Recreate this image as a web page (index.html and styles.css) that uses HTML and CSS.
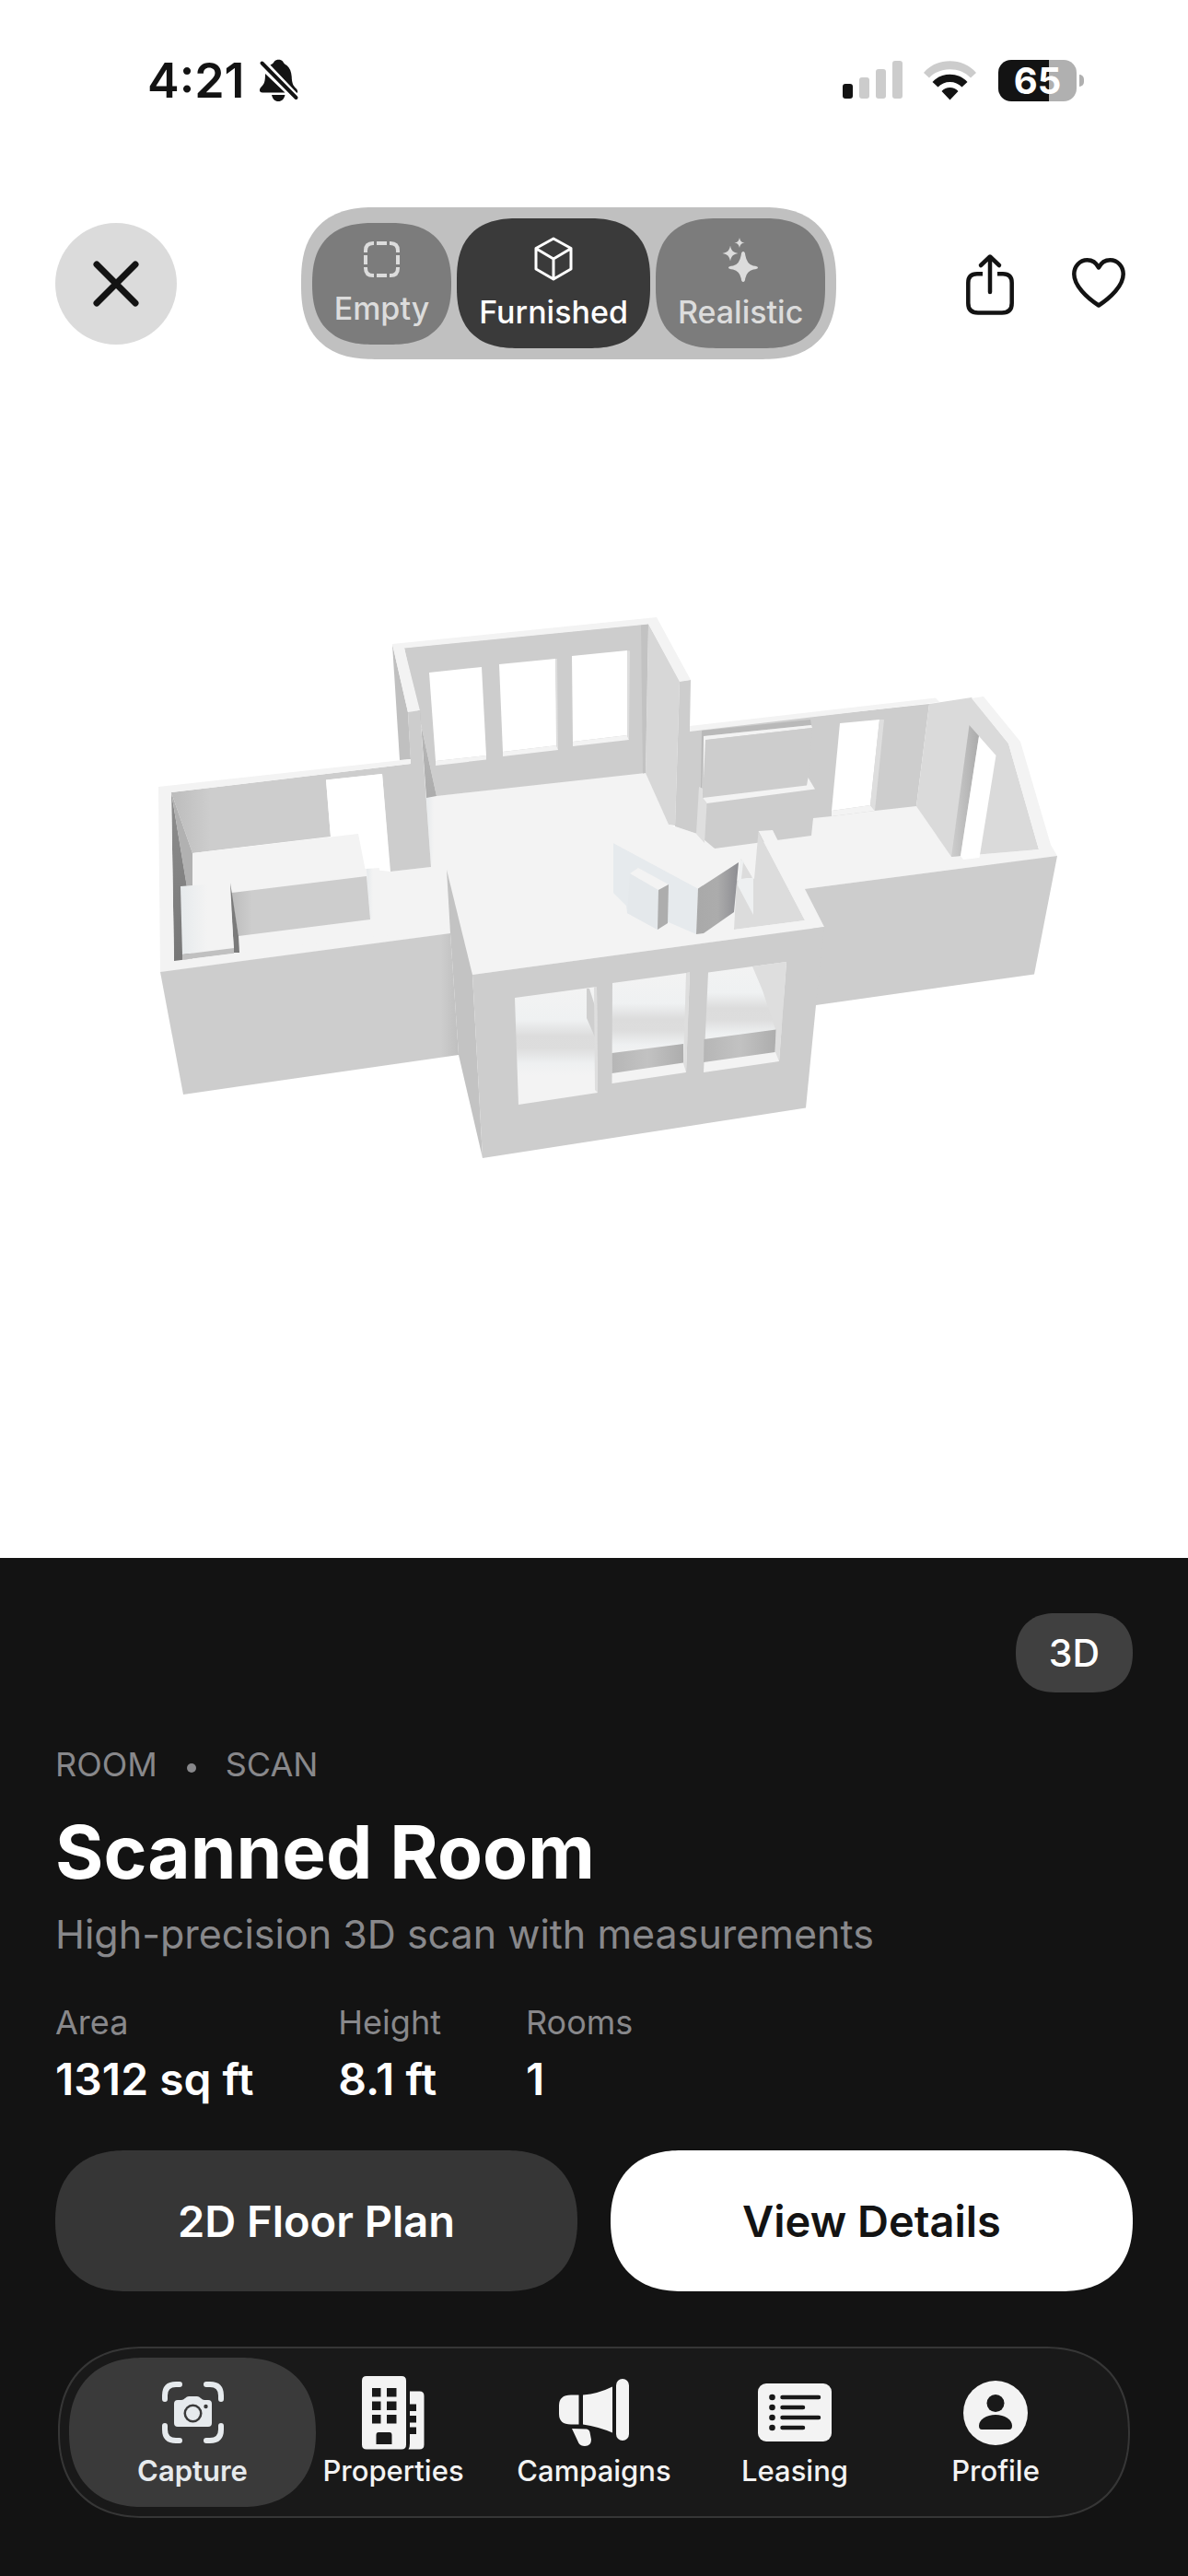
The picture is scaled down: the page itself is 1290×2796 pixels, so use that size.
FILE: index.html
```html
<!DOCTYPE html>
<html lang="en">
<head>
<meta charset="utf-8">
<meta name="viewport" content="width=device-width, initial-scale=1">
<title>Scanned Room</title>
<link rel="stylesheet" href="styles.css">
</head>
<body>
<div class="status">
  <div class="status-left">
    <span class="time">4:21</span>
    <svg width="42" height="46" viewBox="281 65 42 46" aria-label="Silent mode">
      <path fill="#131313" d="M292.500 71.500C294.500 70.500 296 69.500 297 67.500C299 65 304 65 306 67.500C307 69.500 308 70.500 310.500 72C314 75 315.300 79 315.700 84C316 92 317.500 94 320.500 97C322.500 99 322.500 101 321.500 102ZM287 81L308.500 101.500H284C280.500 101.500 280 98 282.500 95.500C286 92 287 90 287 81ZM294 104H308.500C307.500 108.500 305 111 301.300 111C297.500 111 295 108.500 294 104Z"/>
      <path stroke="#131313" stroke-width="4" stroke-linecap="round" d="M283.500 69.500L320.500 107"/>
    </svg>
  </div>
  <div class="status-right">
    <svg width="65" height="42" viewBox="916 66 65 42" aria-label="Signal">
      <rect x="916" y="91" width="11" height="16" rx="3" fill="#131313"/>
      <g fill="#ccc"><rect x="934" y="84" width="11" height="23" rx="3"/><rect x="952" y="75" width="11" height="32" rx="3"/><rect x="970" y="66" width="11" height="41" rx="3"/></g>
    </svg>
    <svg width="58" height="43" viewBox="1004 65 58 43" aria-label="Wi-Fi">
      <path fill="#ccc" d="M1004 78C1018 61 1047 61 1061 78L1055 83.500C1044 71 1021 71 1010 83.500Z"/>
      <path fill="#131313" d="M1013.500 88C1023 77 1042 77 1051.500 88L1045.500 93.500C1039 86 1026 86 1019.500 93.500ZM1023.500 98C1028 92.500 1037 92.500 1041.500 98L1032.500 107.500Z"/>
    </svg>
    <div class="battery"><span class="battery-level">65</span></div>
  </div>
</div>

<header class="topbar">
  <button class="close" aria-label="Close">
    <svg width="50" height="50" viewBox="0 0 50 50" fill="none" stroke="#131313" stroke-width="7" stroke-linecap="round"><path d="M4 4L46 46M46 4L4 46"/></svg>
  </button>
  <div class="modes">
    <button class="mode">
      <svg width="39" height="39" viewBox="0 -2 39 39" fill="none" stroke="currentColor" stroke-width="4"><path d="M2 12V10Q2 2 10 2H11M14 2H25M28 2H29Q37 2 37 10V12M37 15V25M37 28V29Q37 37 29 37H28M25 37H14M11 37H10Q2 37 2 29V28M2 25V15"/></svg>
      <span>Empty</span>
    </button>
    <button class="mode mode-active">
      <svg width="44" height="48" viewBox="0 0 44 48" fill="none" stroke="currentColor" stroke-width="3" stroke-linejoin="round"><path d="M22 4L41 14.500V37L22 48L3 37V14.500ZM3.500 15L22 26L40.500 15M22 26V47"/></svg>
      <span>Furnished</span>
    </button>
    <button class="mode">
      <svg width="40" height="48" viewBox="0 -1 40 48" fill="currentColor"><path d="M23 17Q25 17 25.300 21Q27 31 34 32.500Q39 33 39 34.500Q39 36 34 36.500Q27 38 25.300 46Q25 50 23 50Q21 50 20.700 46Q19 38 12 36.500Q7 36 7 34.500Q7 33 12 32.500Q19 31 20.700 21Q21 17 23 17ZM9 10.500C10 16 12 18 17.500 19C12 20 10 22 9 27.500C8 22 6 20 .5 19C6 18 8 16 9 10.500ZM19 2C19.800 5.500 21 7 24.500 7.500C21 8 19.800 9.500 19 13C18.200 9.500 17 8 13.500 7.500C17 7 18.200 5.500 19 2Z"/></svg>
      <span>Realistic</span>
    </button>
  </div>
  <div class="actions">
    <button class="icon-button" aria-label="Share">
      <svg width="64" height="70" viewBox="1043 274 64 70" fill="none" stroke="#131313" stroke-width="4.500"><path d="M1067 298.300H1061Q1051.300 298.300 1051.300 308V330Q1051.300 340.500 1062 340.500H1088Q1098.700 340.500 1098.700 330V308Q1098.700 298.300 1089 298.300H1083"/><path stroke-linecap="round" stroke-linejoin="round" d="M1075 318V280M1065 289L1075 279.500L1085 289"/></svg>
    </button>
    <button class="icon-button" aria-label="Favorite">
      <svg width="74" height="70" viewBox="1156 274 74 70" fill="none" stroke="#131313" stroke-width="4.500" stroke-linejoin="round"><path d="M1193 332.500C1180 324 1166.300 311 1166.300 298.500C1166.300 290 1172.500 283.300 1180.500 283.300C1186 283.300 1190.500 286.500 1193 291.500C1195.500 286.500 1200 283.300 1205.500 283.300C1213.500 283.300 1219.700 290 1219.700 298.500C1219.700 311 1206 324 1193 332.500Z"/></svg>
    </button>
  </div>
</header>

<main class="viewer">
  <svg class="model" viewBox="0 640 1290 640" role="img" aria-label="3D model of the scanned room">
    <defs>
      <linearGradient id="dark" x1="0" y1="0" x2="0" y2="1"><stop offset="0" stop-color="#8e8e8e"/><stop offset="1" stop-color="#777"/></linearGradient>
      <linearGradient id="backLeft"><stop offset="0" stop-color="#bcbcbc"/><stop offset=".15" stop-color="#cdcdcd"/></linearGradient>
      <linearGradient id="sideWall" x1="0" y1="0" x2="0" y2="1"><stop offset="0" stop-color="#c6c6c6"/><stop offset="1" stop-color="#acacac"/></linearGradient>
      <linearGradient id="corner"><stop offset="0" stop-color="#cdcdcd"/><stop offset=".94" stop-color="#cdcdcd"/><stop offset="1" stop-color="#bfbfbf"/></linearGradient>
      <linearGradient id="facet"><stop offset="0" stop-color="#a9a9a9"/><stop offset=".5" stop-color="#acacac"/><stop offset="1" stop-color="#8d8d92"/></linearGradient>
      <linearGradient id="band"><stop offset="0" stop-color="#b6b6b6"/><stop offset=".5" stop-color="#c2c2c2"/><stop offset="1" stop-color="#adadad"/></linearGradient>
      <linearGradient id="glass" x1="0" y1="0" x2="0" y2="1"><stop offset="0" stop-color="#f3f3f3"/><stop offset=".28" stop-color="#eff1f2"/><stop offset=".42" stop-color="#dcdcdc"/><stop offset=".52" stop-color="#dddddd"/><stop offset=".65" stop-color="#eef0f1"/><stop offset=".75" stop-color="#f3f3f3"/><stop offset="1" stop-color="#f3f3f3"/></linearGradient>
      <linearGradient id="shade"><stop offset="0" stop-color="#e6eaec"/><stop offset=".5" stop-color="#f3f3f3"/></linearGradient>
      <linearGradient id="jamb"><stop offset="0" stop-color="#cdcdcd"/><stop offset="1" stop-color="#ababab"/></linearGradient>
    </defs>
    <!-- floor -->
    <path fill="#f3f3f3" d="M463 865L701 838L726 895L757 905L903 880L945 874L995 874L1033 930L1130 922L1148 929L873 965L895 1006L513 1058L489 1013L174 1055L189 1043L209 926L398 943L424 946L468 941Z"/>
    <path fill="url(#shade)" d="M463 865L479 863L474 905L468 941Z"/>
    <!-- rear room -->
    <path fill="#c0c0c0" d="M426 699L443 773L446 824L434 825Z"/>
    <path fill="#cdcdcd" d="M439 703L704 677L701 839L474 864Z"/>
    <path fill="#c2c2c2" d="M696 678L704 677L701 839L698 839.500Z"/>
    <path fill="url(#sideWall)" d="M439 703L474 864L463 866L456 771Z"/>
    <path fill="#fff" d="M466 730L523 724L528 820L473 826ZM542 721L603 715L605 809L546 816ZM621 712L681 706V798L622 805Z"/>
    <path fill="#f3f3f3" d="M473 826L528 820V824.500L473 831ZM546 816L605 809L606 814L546 821ZM622 805L681 798L683 803L622 810Z"/>
    <path fill="#dedede" d="M681 706L684 706.500L683 803L681 799ZM603 715L605 715L606 813L604 810Z"/>
    <path fill="#d7d7d7" d="M704 677L738 739L733 896L726 895L701 839Z"/>
    <!-- rear wall of the right room -->
    <path fill="#cdcdcd" d="M738 739L750 738L749 792L1009 764L995 875L950 880L903 886L883 888L881 907L776 921L757 905L733 897Z"/>
    <path fill="#f3f3f3" d="M749 788L1016 757.500L1020 762L749 794Z"/>
    <path fill="#fff" d="M912 785L955 781L945 874L903 880Z"/>
    <path fill="#f3f3f3" d="M903 880L945 874L950 880L903 886Z"/>
    <path fill="#dedede" d="M955 781L960 781L950 880L945 874Z"/>
    <path fill="#b9b9b9" d="M762 793L880 781L881 787L764 799L762 855H761Z"/>
    <path fill="#f3f3f3" d="M764 799L881 787L882 790L768 803L764 866Z"/>
    <path fill="#cdcdcd" d="M766 803L882 790L877 853L763 866Z"/>
    <path fill="#f3f3f3" d="M763 866L876 852.500L877.500 844L885 856.500L767.500 872Z"/>
    <path fill="#dfdfdf" d="M759 854L763 856V866L767.500 872L765 915L756 905Z"/>
    <!-- angled wall -->
    <path fill="#dadada" d="M1009 764L1055 757L1095 807L1128 922L1033 930L995 875Z"/>
    <path fill="url(#jamb)" d="M1052.500 787L1063 799L1043 929L1033 930Z"/>
    <path fill="#fff" d="M1063 799L1081.500 820L1063.500 931L1046 933L1043 929Z"/>
    <path fill="#f3f3f3" d="M1055 758L1068 756L1108 805L1141 917L1148 929L1080 939L1045 934L1128 922L1095 807ZM713 670L750 738L738 740L704 677ZM426 699L713 670L704 677.500L439 703.500L456 771L443 773.500Z"/>
    <!-- left room -->
    <path fill="url(#backLeft)" d="M186 860L446 829L443 773L456 771L468 941L424 946L415 840L354 846.500L359 908L209 926Z"/>
    <path fill="#fff" d="M354 846.500L415 840L423 942L398 943L389 905L359 908Z"/>
    <path fill="url(#shade)" d="M398 943L412 942L408 994L402 998Z"/>
    <path fill="url(#dark)" d="M186 860L203 962L209 1042L189 1044Z"/>
    <path fill="#b1b1b1" d="M186 860L209 926V964H203Z"/>
    <path fill="#f3f3f3" d="M209 926L389 905L398 951L251 969L250 958L209 963Z"/>
    <path fill="url(#backLeft)" d="M251 969L398 951L402 998L259 1016Z"/>
    <path fill="#7a7a7a" d="M250 958L259 1016L260 1034H254Z"/>
    <path fill="url(#shade)" d="M196 962L249 958L254 1030L198 1036Z"/>
    <path fill="#c0c0c0" d="M198 1036L254 1029V1035L198 1042Z"/>
    <path fill="#f3f3f3" d="M172 854L446 824V829L186 860L189 1043L260 1034L489 1007V1013L174 1055Z"/>
    <path fill="url(#corner)" d="M174 1055L489 1013L498 1145L199 1188Z"/>
    <path fill="#cdcdcd" d="M873 965L1148 929L1123 1057.500L886 1091L882 1006Z"/>
    <!-- front-right corner wall -->
    <path fill="#dcdcdc" d="M804.500 932L817 953L819 954L823.500 903L874 999L797 1009L800 956L803 955Z"/>
    <path fill="#eef0f1" d="M804 933L808 935V953L818 953L818 993L801 961Z"/>
    <path fill="#dcdcdc" d="M807 936L816.500 952L805 954Z"/>
    <path fill="#f3f3f3" d="M823.500 902L839 901L844 911L874 965L895 1006L797 1021V1009L874 999Z"/>
    <!-- island -->
    <path fill="#e6eaed" d="M666 915L758 964.500L756 1014L726 1001L714 1009L681 991L680 983L666 969Z"/>
    <path fill="#f3f3f3" d="M666 915L726 895L776 921L802 936L758 964.500Z"/>
    <path fill="url(#facet)" d="M758 964.500L802 936L797 990L764 1013L756 1014Z"/>
    <path fill="#e4e8eb" d="M684 948L715 966L714 1009L681 991Z"/>
    <path fill="#f3f3f3" d="M684 948L693 942L726 960L715 966Z"/>
    <path fill="#adadad" d="M715 966L726 960L725 1002L714 1009Z"/>
    <!-- front room -->
    <path fill="#c3c3c3" d="M485 944L513 1058L524 1257L498 1145L489 1013Z"/>
    <path fill="#cdcdcd" d="M513 1058L895 1006L886 1091L875 1202.500L524 1257Z"/>
    <path fill="url(#glass)" d="M559 1083L648 1071L649 1186L563 1199Z"/>
    <path fill="url(#glass)" d="M665 1067L749 1055.500L745 1164L664.500 1176Z"/>
    <path fill="url(#glass)" d="M769 1055.500L854 1044L846 1152L764 1164Z"/>
    <path fill="#cfcfcf" d="M637 1073L640 1073L647 1095V1128L637 1105Z"/>
    <path fill="#dedede" d="M745 1056L749 1055.500L745 1164L742 1154ZM817 1049L854 1044L846 1152L842 1142V1117L828 1075ZM645 1071L648 1071L649 1186L646 1183Z"/>
    <path fill="url(#band)" d="M664.500 1143L742 1133V1153.500L664.500 1165Z"/>
    <path fill="url(#band)" d="M764.500 1128L842.500 1117.500L841.500 1142L764 1153Z"/>
  </svg>
</main>

<section class="panel">
  <div class="badge-row"><span class="badge">3D</span></div>
  <p class="meta"><span>ROOM</span><span class="dot"></span><span>SCAN</span></p>
  <h1 class="title">Scanned Room</h1>
  <p class="subtitle">High-precision 3D scan with measurements</p>
  <dl class="stats">
    <div><dt>Area</dt><dd>1312 sq ft</dd></div>
    <div><dt>Height</dt><dd>8.1 ft</dd></div>
    <div><dt>Rooms</dt><dd>1</dd></div>
  </dl>
  <div class="buttons">
    <button class="button">2D Floor Plan</button>
    <button class="button button-light">View Details</button>
  </div>
  <nav class="tabs">
    <a class="tab tab-active" href="#capture">
      <svg width="80" height="80" viewBox="170 2579 80 80">
        <path fill="none" stroke="currentColor" stroke-width="6" stroke-linecap="round" d="M180 2604V2600Q180 2588 192 2588H196M225 2588H229Q241 2588 241 2600V2604M241 2633V2637Q241 2649 229 2649H225M196 2649H192Q180 2649 180 2637V2633"/>
        <path fill="currentColor" fill-rule="evenodd" d="M194 2605H198Q200 2605 202 2603Q204 2601 206 2601H215Q217 2601 219 2603Q221 2605 223 2605H227Q231 2605 231 2609V2630Q231 2634 227 2634H194Q190 2634 190 2630V2609Q190 2605 194 2605ZM210.500 2609.500A10 10 0 1 0 210.500 2629.500A10 10 0 1 0 210.500 2609.500ZM224.500 2609.800A2.200 2.200 0 1 0 224.500 2614.200A2.200 2.200 0 1 0 224.500 2609.800Z"/>
        <circle cx="210.500" cy="2619.500" r="7.500" fill="currentColor"/>
      </svg>
      <span>Capture</span>
    </a>
    <a class="tab" href="#properties">
      <svg width="80" height="80" viewBox="388 2579 80 80" fill="currentColor" fill-rule="evenodd">
        <path d="M399 2579H437Q442 2579 442 2584V2653.500Q442 2658.500 437 2658.500H399Q394 2658.500 394 2653.500V2584Q394 2579 399 2579ZM405 2592V2601.500H414.500V2592ZM421 2592V2601.500H431.500V2592ZM405 2606.500V2616H414.500V2606.500ZM421 2606.500V2616H431.500V2606.500ZM405 2621V2630.500H414.500V2621ZM421 2621V2630.500H431.500V2621ZM412 2640Q409.500 2640 409.500 2643V2653H426.500V2643Q426.500 2640 424 2640Z"/>
        <path d="M446 2595.500H456.500Q461.500 2595.500 461.500 2600.500V2653.500Q461.500 2658.500 456.500 2658.500H444.500Q446 2656 446 2652V2642H453V2634.500H446V2629.500H453V2622H446V2617H453V2609.500H446Z"/>
      </svg>
      <span>Properties</span>
    </a>
    <a class="tab" href="#campaigns">
      <svg width="80" height="80" viewBox="605 2579 80 80" fill="currentColor">
        <path d="M628.500 2599.500V2631.500H620Q607 2631.500 607 2620V2611Q607 2599.500 620 2599.500ZM633 2599.500Q650 2598 665 2590.500V2640.500Q650 2634 633 2631.500ZM621 2636L637 2636.500Q640 2637 640.500 2640L642 2648Q642 2655 635 2655Q630.500 2655 628.500 2652Z"/>
        <rect x="669" y="2582" width="14" height="67" rx="7"/>
      </svg>
      <span>Campaigns</span>
    </a>
    <a class="tab" href="#leasing">
      <svg width="80" height="80" viewBox="822 2579 80 80">
        <rect x="822" y="2587" width="80" height="63" rx="9" fill="currentColor"/>
        <path stroke="#191919" stroke-width="4.500" stroke-linecap="round" d="M848.500 2602H888M848.500 2613H871M848.500 2624H888M848.500 2635H871"/>
        <g fill="#191919"><circle cx="837.500" cy="2602" r="3.300"/><circle cx="837.500" cy="2613" r="3.300"/><circle cx="837.500" cy="2624" r="3.300"/><circle cx="837.500" cy="2635" r="3.300"/></g>
      </svg>
      <span>Leasing</span>
    </a>
    <a class="tab" href="#profile">
      <svg width="80" height="80" viewBox="1041 2579 80 80">
        <circle cx="1081" cy="2619" r="35" fill="currentColor"/>
        <circle cx="1081" cy="2608.500" r="9.500" fill="#191919"/>
        <path fill="#191919" d="M1063 2633C1063 2626 1071 2621 1081 2621S1099 2626 1099 2633Q1099 2637 1096 2637H1066Q1063 2637 1063 2633Z"/>
      </svg>
      <span>Profile</span>
    </a>
  </nav>
</section>
</body>
</html>
```
FILE: styles.css
```css
* {
  box-sizing: border-box;
}

body {
  margin: 0;
  min-height: 100vh;
  display: flex;
  flex-direction: column;
  background: #fff;
  color: #131313;
  font-family: Inter, "Liberation Sans", sans-serif;
}

button {
  margin: 0;
  padding: 0;
  border: 0;
  background: none;
  color: inherit;
  font: inherit;
}

svg {
  display: block;
  overflow: visible;
}

h1, p, dl, dd {
  margin: 0;
}

.status {
  display: flex;
  justify-content: space-between;
  align-items: center;
  height: 174px;
  padding: 0 113px 0 160px;
}

.status-left {
  display: flex;
  align-items: center;
  gap: 16px;
}

.time {
  font-size: 52px;
  font-weight: 600;
}

.status-right {
  display: flex;
  align-items: center;
  gap: 23px;
}

.battery {
  display: flex;
  align-items: center;
  gap: 3px;
}

.battery::after {
  content: "";
  width: 5px;
  height: 13px;
  border-radius: 0 6px 6px 0;
  background: #b0b0b0;
}

.battery-level {
  width: 85px;
  border-radius: 14px;
  background: linear-gradient(90deg, #131313 65%, #b0b0b0 65%);
  color: #fff;
  font-size: 40px;
  font-weight: 700;
  line-height: 45px;
  text-align: center;
}

.topbar {
  display: flex;
  justify-content: space-between;
  align-items: center;
  padding: 51px 60px 0;
}

.close {
  display: flex;
  align-items: center;
  justify-content: center;
  width: 132px;
  height: 132px;
  border-radius: 50%;
  background: #dbdbdb;
}

.modes {
  display: flex;
  align-items: center;
  gap: 6px;
  padding: 12px;
  border-radius: 80px;
  corner-shape: superellipse(1.3);
  background: #c0c0c0;
}

.mode {
  display: flex;
  flex-direction: column;
  align-items: center;
  gap: 15px;
  padding: 18px 24px;
  border-radius: 66px;
  corner-shape: superellipse(1.3);
  background: #7c7c7c;
  color: #dcdcdc;
  font-size: 34px;
  font-weight: 500;
  line-height: 42px;
}

.mode-active {
  background: #3a3a3a;
  color: #fff;
}

.actions {
  display: flex;
  align-items: center;
  gap: 49px;
}

.viewer {
  flex: 1;
  padding: 250px 0 408px;
}

.model {
  width: 100%;
  height: auto;
}

.panel {
  padding: 60px 60px 63px;
  background: #131313;
  color: #fff;
}

.badge-row {
  display: flex;
  justify-content: flex-end;
}

.badge {
  padding: 18px 36px;
  border-radius: 43px;
  corner-shape: superellipse(1.2);
  background: #404040;
  font-size: 41px;
  font-weight: 500;
  line-height: 50px;
}

.meta {
  display: flex;
  align-items: center;
  gap: 32px;
  margin-top: 56px;
  color: #88888b;
  font-size: 36px;
  line-height: 44px;
}

.dot {
  width: 10px;
  height: 10px;
  margin-top: 8px;
  border-radius: 50%;
  background: currentColor;
}

.title {
  margin-top: 24px;
  font-size: 80px;
  font-weight: 700;
  line-height: 98px;
}

.subtitle {
  margin-top: 14px;
  color: #88888b;
  font-size: 43px;
  line-height: 52px;
}

.stats {
  display: flex;
  gap: 92px;
  margin-top: 48px;
}

.stats dt {
  color: #88888b;
  font-size: 36px;
  line-height: 44px;
}

.stats dd {
  margin-top: 11px;
  font-size: 48px;
  font-weight: 600;
  line-height: 58px;
}

.buttons {
  display: flex;
  gap: 36px;
  margin-top: 48px;
}

.button {
  flex: 1;
  padding: 48px 24px;
  border-radius: 77px;
  corner-shape: superellipse(1.2);
  background: #363636;
  color: #fff;
  font-size: 47px;
  font-weight: 600;
  line-height: 57px;
}

.button-light {
  background: #fff;
  color: #131313;
}

.tabs {
  display: grid;
  grid-template-columns: repeat(5, minmax(0, 1fr));
  margin: 60px 3px 0;
  padding: 10px 35px;
  border: 2px solid #363636;
  border-radius: 93px;
  corner-shape: superellipse(1.2);
  background: #191919;
}

.tab {
  display: flex;
  flex-direction: column;
  align-items: center;
  gap: 5px;
  padding: 20px 0 21px;
  border-radius: 81px;
  corner-shape: superellipse(1.2);
  color: #f3f3f3;
  font-size: 31px;
  font-weight: 500;
  line-height: 36px;
  text-decoration: none;
}

.tab-active {
  margin: 0 -25px;
  background: #3a3a3a;
  color: #e6eaed;
  font-weight: 600;
}
```
